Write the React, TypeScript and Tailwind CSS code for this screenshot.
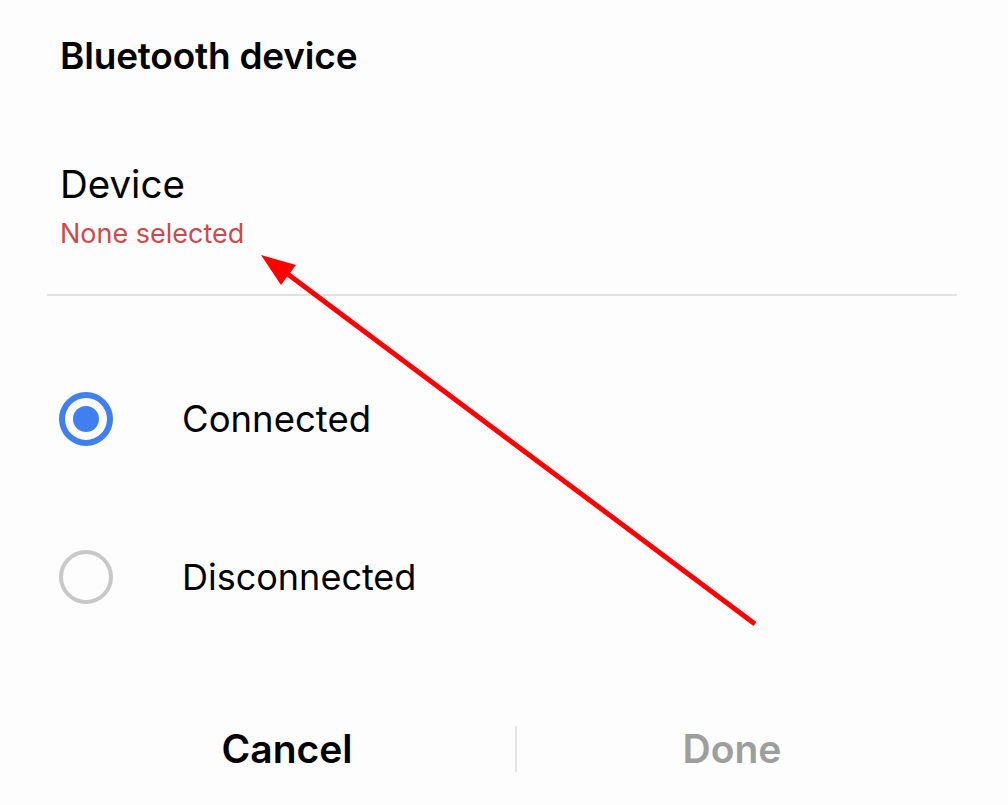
import React from 'react';

const Radio: React.FC<{ checked?: boolean }> = ({ checked }) =>
  checked ? (
    <div className="w-[54px] h-[54px] rounded-full border-[6px] border-[#3f7ff0] flex items-center justify-center">
      <div className="w-[26px] h-[26px] rounded-full bg-[#3f7ff0]" />
    </div>
  ) : (
    <div className="w-[54px] h-[54px] rounded-full border-[4px] border-[#c8c8c8]" />
  );

export default function App() {
  return (
    <div className="relative w-[1008px] h-[805px] bg-[#fdfdfd] text-black font-['Inter','Roboto',sans-serif] overflow-hidden">
      <div className="pt-[33px] px-[60px]">
        <h1 className="text-[37px] font-semibold leading-[46px] tracking-[-0.2px]">Bluetooth device</h1>
      </div>

      <div className="px-[60px] pt-[81px]">
        <div className="text-[38.5px] leading-[48px]">Device</div>
        <div className="text-[27px] leading-[34px] text-[#c94c4c] mt-[9px]">None selected</div>
      </div>

      <div className="ml-[47px] mr-[51px] mt-[43px] h-[2px] bg-[#e2e2e2]" />

      <div className="px-[59px] pt-[96px] flex flex-col gap-[104px]">
        <div className="flex items-center gap-[69px]">
          <Radio checked />
          <span className="text-[36.5px] leading-[46px]">Connected</span>
        </div>
        <div className="flex items-center gap-[69px]">
          <Radio />
          <span className="text-[36px] leading-[46px]">Disconnected</span>
        </div>
      </div>

      <div className="absolute left-0 right-0 bottom-[33px] flex items-center">
        <button className="w-[515px] text-[39px] font-semibold text-black leading-[46px] pl-[59px]">Cancel</button>
        <div className="w-[2px] h-[46px] bg-[#e6e6e6]" />
        <button className="flex-1 text-[39px] font-semibold text-[#9e9e9e] leading-[46px] pr-[61px]">Done</button>
      </div>

      <svg className="absolute inset-0 pointer-events-none" width="1008" height="805" viewBox="0 0 1008 805">
        <line x1="755" y1="624" x2="285" y2="272" stroke="#ff0000" strokeWidth="5" strokeLinecap="butt" />
        <polygon points="261,255 296,265 281,285" fill="#ff0000" />
      </svg>
    </div>
  );
}
